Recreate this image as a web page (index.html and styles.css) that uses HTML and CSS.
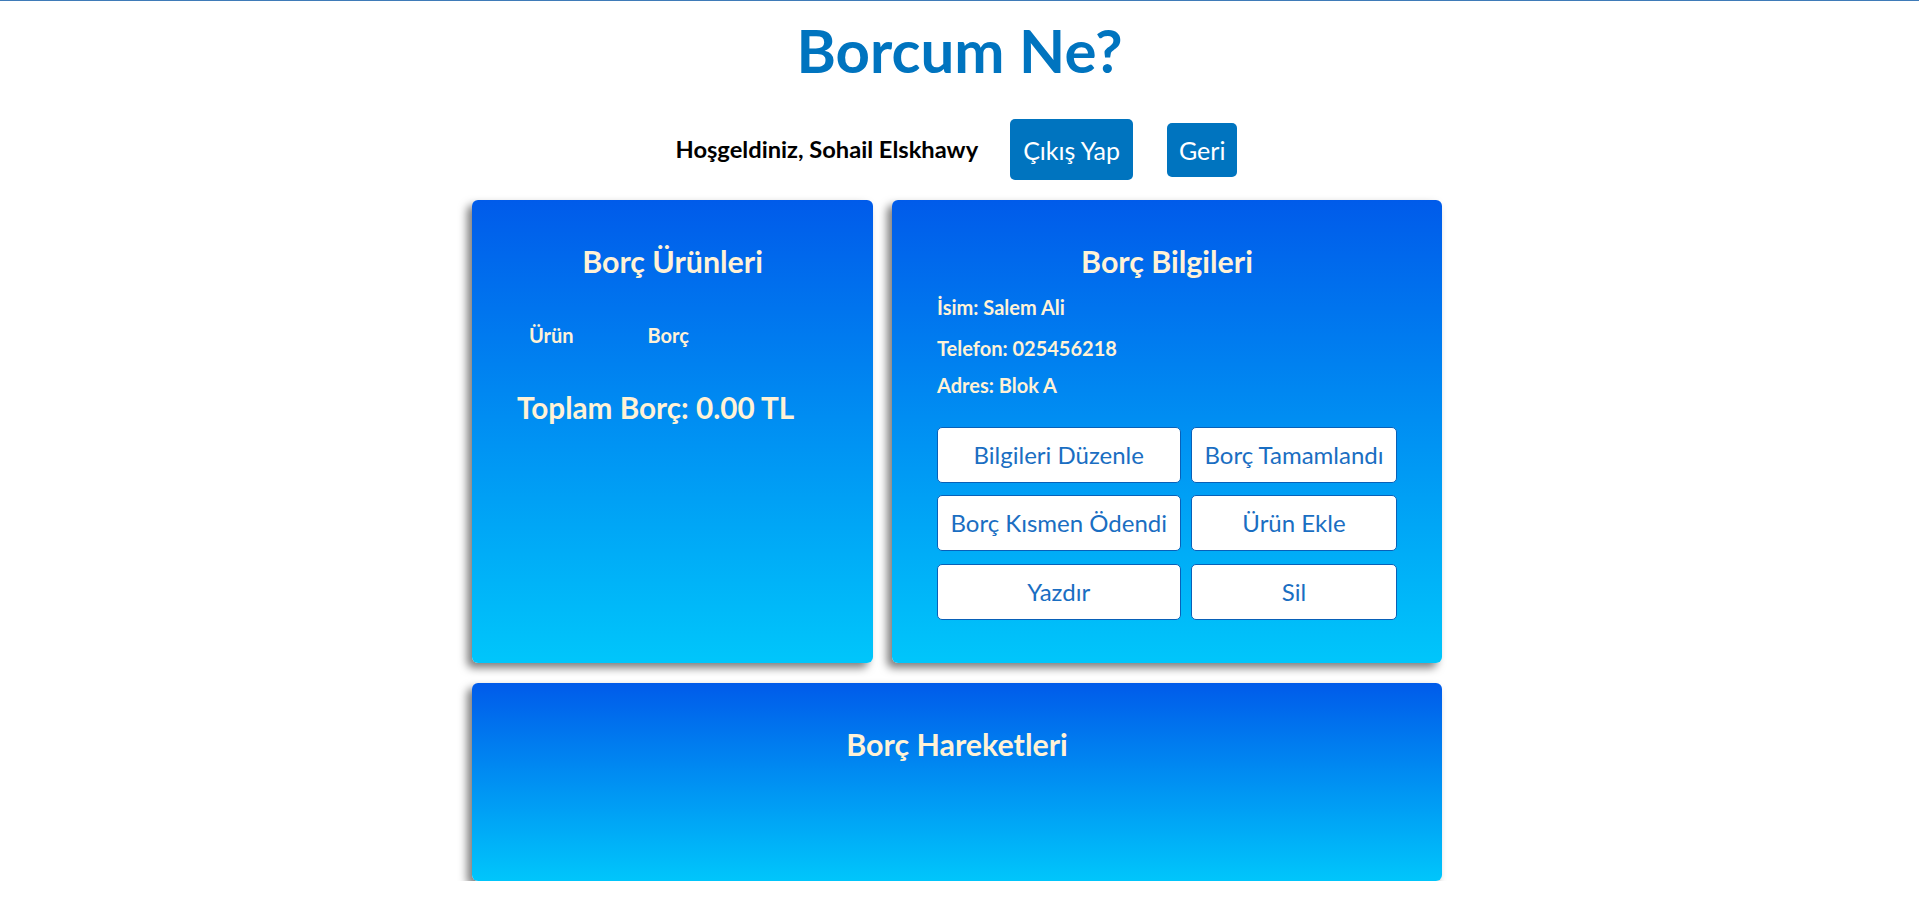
FILE: index.html
```html
<!DOCTYPE html>
<html lang="tr">
<head>
<meta charset="utf-8">
<title>Borcum Ne?</title>
<link rel="stylesheet" href="styles.css">
</head>
<body>
<h1 class="site-title">Borcum Ne?</h1>
<div class="welcome">
  <span class="welcome-text">Hoşgeldiniz, Sohail Elskhawy</span>
  <button class="btn-primary btn-logout">Çıkış Yap</button>
  <button class="btn-primary btn-back">Geri</button>
</div>
<main class="board">
  <section class="card card-items">
    <h2 class="card-title">Borç Ürünleri</h2>
    <div class="items-head">
      <span class="col-urun">Ürün</span>
      <span class="col-borc">Borç</span>
    </div>
    <div class="total">Toplam Borç: 0.00 TL</div>
  </section>
  <section class="card card-info">
    <h2 class="card-title">Borç Bilgileri</h2>
    <p class="info info-name">İsim: Salem Ali</p>
    <p class="info info-phone">Telefon: 025456218</p>
    <p class="info info-address">Adres: Blok A</p>
    <div class="actions">
      <button class="btn-action">Bilgileri Düzenle</button>
      <button class="btn-action">Borç Tamamlandı</button>
      <button class="btn-action">Borç Kısmen Ödendi</button>
      <button class="btn-action">Ürün Ekle</button>
      <button class="btn-action">Yazdır</button>
      <button class="btn-action">Sil</button>
    </div>
  </section>
  <section class="card card-history">
    <h2 class="card-title">Borç Hareketleri</h2>
  </section>
</main>
</body>
</html>
```
FILE: styles.css
```css
* { box-sizing: border-box; }
html, body { margin: 0; padding: 0; }
body {
  border-top: 1px solid #3f7bb8;
  font-family: Lato, "Open Sans", sans-serif;
  background: #fff;
  color: #000;
}
.site-title {
  margin: 13px 0 0;
  text-align: center;
  font-size: 60px;
  line-height: 1.2;
  font-weight: 700;
  color: #0074bf;
}
.welcome {
  margin-top: 33px;
  padding-right: 6px;
  display: flex;
  justify-content: center;
  align-items: center;
  gap: 34px;
}
.welcome-text {
  font-size: 23.7px;
  line-height: 1.2;
  font-weight: 700;
  margin-right: -2px;
}
.btn-primary {
  font-family: Lato, sans-serif;
  font-size: 25px;
  line-height: 1.2;
  color: #fff;
  background: #0074bf;
  border: none;
  border-radius: 5px;
}
.btn-logout { padding: 15.5px 13px; }
.btn-back { padding: 12px 12px; }
.board {
  width: 975px;
  padding-right: 5px;
  margin: 20px auto 0;
  display: grid;
  grid-template-columns: 401px 550px;
  column-gap: 19px;
  row-gap: 20px;
}
.card {
  background: linear-gradient(to bottom, #005bea, #00c6fb);
  border-radius: 6px;
  box-shadow: -5px 5px 8px rgba(0, 0, 0, 0.5);
  padding: 43px 45px 43px;
  color: #fff2d6;
}
.card-title {
  margin: 0;
  text-align: center;
  font-size: 30.4px;
  line-height: 1.2;
  font-weight: 700;
}
.items-head {
  margin-top: 44px;
  display: flex;
  gap: 74px;
  padding-left: 12px;
  font-size: 20px;
  line-height: 1.2;
  font-weight: 700;
}
.total {
  margin-top: 43px;
  font-size: 29.7px;
  line-height: 1.2;
  font-weight: 700;
}
.info {
  margin: 13px 0 0;
  font-size: 20px;
  line-height: 1.2;
  font-weight: 700;
}
.info-name { margin-top: 16px; }
.info-phone { margin-top: 17px; }
.actions {
  margin-top: 29.5px;
  display: grid;
  grid-template-columns: max-content max-content;
  justify-content: space-between;
  row-gap: 12.5px;
}
.btn-action {
  font-family: Lato, sans-serif;
  font-size: 24px;
  line-height: 1.2;
  padding: 12.6px 12.5px;
  color: #1a6ec2;
  background: #fff;
  border: 1px solid #0860b8;
  border-radius: 5px;
  white-space: nowrap;
}
.card-history {
  grid-column: 1 / -1;
  height: 198px;
}
```
